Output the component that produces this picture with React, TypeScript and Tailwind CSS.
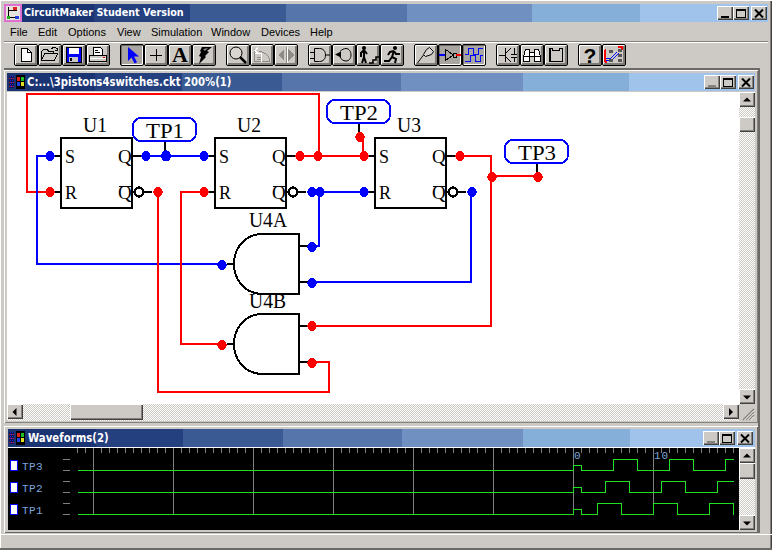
import React from "react";

const RAISED = "bg-[#cdcac5] shadow-[inset_1px_1px_0_#ffffff,inset_-1px_-1px_0_#404040,inset_-2px_-2px_0_#85827e]";
const DITHER = "bg-[repeating-conic-gradient(#ffffff_0_25%,#cdcac5_0_50%)] bg-[length:2px_2px]";

function Svg({ w = 22, h = 20, children }: { w?: number; h?: number; children: React.ReactNode }) {
  return (
    <svg width={w} height={h} viewBox={`0 0 ${w} ${h}`} shapeRendering="crispEdges" className="block">
      {children}
    </svg>
  );
}

function TB({ children, pressed }: { children: React.ReactNode; pressed?: boolean }) {
  return (
    <div
      className={
        pressed
          ? "w-[24px] h-[22px] border border-black rounded-[2px] bg-[#a9a6a2] shadow-[inset_1px_1px_0_#6f6c69,inset_-1px_-1px_0_#ffffff] flex items-center justify-center"
          : "w-[24px] h-[22px] border border-black rounded-[2px] bg-[#cdcac5] shadow-[inset_1px_1px_0_#ffffff,inset_-2px_-2px_0_#7d7a76] flex items-center justify-center"
      }
    >
      {children}
    </div>
  );
}

const I = {
  New: () => (
    <Svg>
      <path d="M6.500 3.500h6l4 4v9h-10z" fill="#fff" stroke="#000" />
      <path d="M12.500 3.500v4h4" fill="none" stroke="#000" />
    </Svg>
  ),
  Open: () => (
    <Svg>
      <path d="M2.500 15.500v-9l2-2h4l1 2h5v2" fill="#cdcac5" stroke="#000" />
      <path d="M2.500 15.500l3-7h13l-3 7z" fill="#cdcac5" stroke="#000" />
      <path d="M12.500 3.500l2-1h2l2 2M18.500 2.500v3h-3" fill="none" stroke="#000" />
    </Svg>
  ),
  Save: () => (
    <Svg>
      <rect x="3.500" y="2.500" width="15" height="15" fill="#0000ff" stroke="#000" />
      <rect x="6" y="3" width="10" height="6" fill="#fff" />
      <rect x="6" y="12" width="9" height="5" fill="#cdcac5" />
      <rect x="7" y="13" width="2" height="3" fill="#000" />
    </Svg>
  ),
  Print: () => (
    <Svg>
      <path d="M6.500 2.500h7l2 2v6h-9z" fill="#fff" stroke="#000" />
      <path d="M8 5h3M8 7h5" stroke="#000" />
      <path d="M2.500 10.500h17v6h-17z" fill="#cdcac5" stroke="#000" />
      <path d="M3 13h16" stroke="#fff" />
      <rect x="16" y="12" width="2" height="1" fill="#d00" />
    </Svg>
  ),
  Arrow: () => (
    <svg width="22" height="20" viewBox="0 0 22 20" className="block">
      <path d="M7 2l0 14 3.500-3.500 3 6 2.500-1.200-3-5.800 5 0z" fill="#0000ff" />
    </svg>
  ),
  Plus: () => (
    <Svg>
      <path d="M11 4v12M5 10h12" stroke="#000" />
    </Svg>
  ),
  Lightning: () => (
    <svg width="22" height="20" viewBox="0 0 22 20" className="block">
      <path d="M9 2h10l-5 4 2 1-4 4 1 1-7 7 2-7-2-1 2-4-1-1z" fill="#000" />
      <path d="M10 4l5-1-3 3z" fill="#8a8a8a" />
    </svg>
  ),
  Mag: () => (
    <svg width="22" height="20" viewBox="0 0 22 20" className="block">
      <circle cx="9" cy="8" r="6" fill="#d9d6d2" stroke="#000" strokeWidth="1" />
      <path d="M13 12l6 6" stroke="#000" strokeWidth="2.500" />
    </svg>
  ),
  Proto: () => (
    <Svg>
      <path d="M3.500 3.500v13h15c0-7-6-10-11-10" fill="none" stroke="#8d8a86" />
      <path d="M3.500 8.500h7v8M7 2.500l-3 3 3 3" fill="none" stroke="#fff" />
      <path d="M6 12h4M6 14h4" stroke="#8d8a86" />
    </Svg>
  ),
  Flip: () => (
    <Svg>
      <path d="M9 4v12l-6-6z" fill="#8d8a86" />
      <path d="M13 4v12l6-6z" fill="#8d8a86" />
      <path d="M11 2v16" stroke="#8d8a86" />
      <path d="M12 2v16" stroke="#fff" />
    </Svg>
  ),
  Gate: () => (
    <svg width="22" height="20" viewBox="0 0 22 20" className="block">
      <path d="M5.500 3.500h5c4 0 6 3 6 6.500s-2 6.500-6 6.500h-5z" fill="none" stroke="#000" />
      <path d="M1 7.500h4M1 13.500h4M17 10h4" stroke="#000" />
    </svg>
  ),
  Loop: () => (
    <svg width="22" height="20" viewBox="0 0 22 20" className="block">
      <path d="M7 6.500c2-2 4-3 6-3 3 0 5 3 5 6.500s-2 6-5 6-5-2-6-4" fill="none" stroke="#000" />
      <path d="M2 9.500l6-3v6z" fill="#000" />
    </svg>
  ),
  Walk: () => (
    <svg width="22" height="20" viewBox="0 0 22 20" className="block">
      <circle cx="7" cy="3" r="2" fill="#000" />
      <path d="M7 5l-3 3v4M7 5l3 4M7 6v6l-2 6M7 12l2 6" fill="none" stroke="#000" strokeWidth="2" />
      <path d="M12 18h4v-3h3v-3h3" fill="none" stroke="#000" strokeWidth="1.600" />
    </svg>
  ),
  Run: () => (
    <svg width="22" height="20" viewBox="0 0 22 20" className="block">
      <circle cx="14" cy="3" r="2" fill="#000" />
      <path d="M13 6l-4 1-2 3M13 6l-2 6 4 2 -1 4M13 6l2 3h4M11 12l-3 4H3" fill="none" stroke="#000" strokeWidth="2" />
    </svg>
  ),
  Probe: () => (
    <svg width="22" height="20" viewBox="0 0 22 20" className="block">
      <path d="M11.500 4.500l3-2 4 4-2 3-6 2-2-2z" fill="#d9d6d2" stroke="#000" />
      <path d="M8.500 10l-6 8" stroke="#000" />
    </svg>
  ),
  Inv: () => (
    <Svg>
      <path d="M0 10h6" stroke="#0000ff" strokeWidth="2" />
      <path d="M6.500 4.500v11l8-5.500z" fill="none" stroke="#000" />
      <rect x="14" y="8" width="3" height="4" fill="none" stroke="#000" />
      <path d="M17 10h5" stroke="#ff0000" strokeWidth="2" />
    </Svg>
  ),
  Square: () => (
    <Svg>
      <path d="M2 9.500h3v-6h5v6h5v-6h5M2 16.500h5v-6h5v6h5v-6h3" fill="none" stroke="#0000ff" />
    </Svg>
  ),
  Tran: () => (
    <Svg>
      <path d="M8.500 3v14M2 10h6M9 8l5-5M9 12l5 5" stroke="#000" fill="none" />
      <path d="M14 9h6M14 12h6M17 3v6M17 12v5" stroke="#000" />
    </Svg>
  ),
  Bino: () => (
    <Svg>
      <path d="M4.500 4.500h4v3h5v-3h4l2 7v5h-6v-5h-5v5h-6v-5z" fill="#fff" stroke="#000" />
      <path d="M8.500 4v8M13.500 4v8M3 11h6M13 11h6" stroke="#000" />
    </Svg>
  ),
  Chip: () => (
    <Svg>
      <path d="M4.500 3.500h3v2h7v-2h3v13h-13z" fill="none" stroke="#000" strokeWidth="1" />
      <path d="M5 4v12M17 4v12" stroke="#000" />
    </Svg>
  ),
  Net: () => (
    <Svg>
      <path d="M3 5c-1 0-1 1-1 3v7c0 1 1 2 2 2" fill="none" stroke="#ff0000" strokeWidth="2" />
      <path d="M15 2h4v3" fill="none" stroke="#ff0000" strokeWidth="2" />
      <path d="M3 15h6l7-7M3 13h5l6-6" fill="none" stroke="#0000ff" />
      <rect x="6" y="5" width="4" height="3" fill="#555" />
      <rect x="15" y="4" width="4" height="3" fill="#555" />
      <rect x="15" y="9" width="4" height="3" fill="#555" />
      <rect x="6" y="14" width="4" height="3" fill="#555" />
      <rect x="15" y="14" width="4" height="3" fill="#555" />
    </Svg>
  ),
};

function AppIcon() {
  return (
    <svg width="16" height="14" viewBox="0 0 16 14" className="block" shapeRendering="crispEdges">
      <rect x="0" y="1" width="5" height="12" fill="#111a55" />
      <path d="M0 3h5M0 7h5M0 11h5" stroke="#d01818" strokeDasharray="1 1" />
      <path d="M1 1v12M3 1v12" stroke="#2020d8" strokeDasharray="1 1" />
      <rect x="7" y="0" width="9" height="14" fill="#000" />
      <rect x="8" y="2" width="3" height="4" fill="#e02020" />
      <rect x="12" y="2" width="3" height="4" fill="#20c020" />
      <rect x="8" y="7" width="3" height="4" fill="#2040e0" />
      <rect x="12" y="7" width="3" height="4" fill="#e0e020" />
    </svg>
  );
}

function MainIcon() {
  return (
    <svg width="18" height="18" viewBox="0 0 18 18" className="block" shapeRendering="crispEdges">
      <rect x="0" y="0" width="18" height="18" fill="#e070d0" />
      <rect x="2" y="2" width="14" height="14" fill="#e6e3df" />
      <path d="M4.500 3v10h8M4 6.500h9" stroke="#000" fill="none" />
      <rect x="9" y="3" width="4" height="3" fill="#e02020" />
      <rect x="3" y="12" width="3" height="3" fill="#20b020" />
      <rect x="11" y="12" width="4" height="3" fill="#2040e0" />
    </svg>
  );
}

function WinBtn({ kind, disabled }: { kind: "min" | "max" | "close"; disabled?: boolean }) {
  return (
    <div className={`w-[16px] h-[14px] flex items-center justify-center ${RAISED}`}>
      <svg width="12" height="11" viewBox="0 0 12 11" shapeRendering="crispEdges" className="block">
        {kind === "min" && <rect x="2" y="8" width="8" height="2" fill={disabled ? "#85827e" : "#000"} />}
        {kind === "max" && (
          <>
            <rect x="1.500" y="1.500" width="9" height="8" fill="none" stroke="#000" />
            <rect x="1" y="1" width="10" height="2" fill="#000" />
          </>
        )}
        {kind === "close" && <path d="M2 1.500l8 8M10 1.500l-8 8" fill="none" stroke="#000" strokeWidth="2" shapeRendering="auto" />}
      </svg>
    </div>
  );
}

function ScrollBtn({ dir }: { dir: "up" | "down" | "left" | "right" }) {
  const path = { up: "M4 8.500l4-4 4 4z", down: "M4 5.500l4 4 4-4z", left: "M9.500 3l-4 4 4 4z", right: "M6 3l4 4-4 4z" }[dir];
  return (
    <div className={`w-[16px] h-[15px] shrink-0 flex items-center justify-center ${RAISED}`}>
      <svg width="16" height="14" viewBox="0 0 16 14" className="block">
        <path d={path} fill="#000" />
      </svg>
    </div>
  );
}

function Dot({ x, y, c, r = 4.6 }: { x: number; y: number; c: string; r?: number }) {
  return <ellipse cx={x} cy={y} rx={r} ry={r + 0.6} fill={c} />;
}

const RED = "#ff0000";
const BLUE = "#0000ff";
const SERIF = "'Liberation Serif', serif";

function Letter({ x, y, t, size = 17, len }: { x: number; y: number; t: string; size?: number; len?: number }) {
  return (
    <text x={x} y={y} fontFamily={SERIF} fontSize={size} fill="#000" textLength={len} lengthAdjust={len ? "spacingAndGlyphs" : undefined}>
      {t}
    </text>
  );
}

function FlipFlop({ x }: { x: number }) {
  return (
    <g>
      <rect x={x} y={138} width={71} height={70} fill="#fff" stroke="#000" strokeWidth="2" />
      <Letter x={x + 4} y={163} t="S" size={18} />
      <Letter x={x + 4} y={199} t="R" size={18} />
      <Letter x={x + 57} y={163} t="Q" size={19} />
      <Letter x={x + 57} y={199} t="Q" size={19} />
      <path d={`M${x + 58} 186h13`} stroke="#000" strokeWidth="1" />
      <path d={`M${x - 6} 156h6M${x - 6} 192h6M${x + 71} 156h9`} stroke="#000" strokeWidth="2" fill="none" />
      <circle cx={x + 78} cy={192} r={4.5} fill="#fff" stroke="#000" strokeWidth="2.500" />
      <path d={`M${x + 83} 192h8`} stroke="#000" strokeWidth="2" />
    </g>
  );
}

function Gate({ y }: { y: number }) {
  return (
    <g>
      <path d={`M299 ${y}h-36c-18 0-29 14-29 30s11 30 29 30h36z`} fill="#fff" stroke="#000" strokeWidth="2" />
      <path d={`M227 ${y + 30}h7M299 ${y + 12}h10M299 ${y + 48}h10`} stroke="#000" strokeWidth="2" />
    </g>
  );
}

function TP({ x, y, t }: { x: number; y: number; t: string }) {
  return (
    <g>
      <rect x={x} y={y} width={63} height={23} rx={8} fill="#fff" stroke={BLUE} strokeWidth="2" />
      <Letter x={x + 13} y={y + 20} t={t} size={20} len={38} />
    </g>
  );
}

function Circuit() {
  return (
    <svg width="733" height="312" viewBox="7 92 733 312" className="block" shapeRendering="crispEdges">
      <g fill="none" strokeWidth="2">
        <path d="M50 192H27V94H319V156" stroke={RED} />
        <path d="M50 156H37V264H222" stroke={BLUE} />
        <path d="M146 156H204" stroke={BLUE} />
        <path d="M158 192V392H329V362H312" stroke={RED} />
        <path d="M204 192H181V344H222" stroke={RED} />
        <path d="M300 156H364M363 137V156" stroke={RED} />
        <path d="M312 192H364M319 192V246H312" stroke={BLUE} />
        <path d="M460 156H491V326H312M491 176H538" stroke={RED} />
        <path d="M472 192H471V282H312" stroke={BLUE} />
      </g>
      <path d="M165 140V156M359 122V136M537 162V176" stroke="#000" strokeWidth="2" />
      <FlipFlop x={61} />
      <FlipFlop x={215} />
      <FlipFlop x={375} />
      <Gate y={234} />
      <Gate y={314} />
      <TP x={133} y={118} t="TP1" />
      <TP x={327} y={100} t="TP2" />
      <TP x={505} y={140} t="TP3" />
      <Letter x={83} y={132} t="U1" size={20} len={24} />
      <Letter x={237} y={132} t="U2" size={20} len={24} />
      <Letter x={397} y={132} t="U3" size={20} len={24} />
      <Letter x={249} y={227} t="U4A" size={20} len={38} />
      <Letter x={249} y={308} t="U4B" size={20} len={37} />
      <Dot x={50} y={156} c={BLUE} />
      <Dot x={50} y={192} c={RED} />
      <Dot x={146} y={156} c={BLUE} />
      <Dot x={166} y={156} c={BLUE} r={5} />
      <Dot x={204} y={156} c={BLUE} />
      <Dot x={158} y={192} c={RED} />
      <Dot x={204} y={192} c={RED} />
      <Dot x={300} y={156} c={RED} />
      <Dot x={318} y={156} c={RED} />
      <Dot x={364} y={156} c={RED} />
      <Dot x={360} y={137} c={RED} />
      <Dot x={312} y={192} c={BLUE} />
      <Dot x={320} y={192} c={BLUE} />
      <Dot x={364} y={192} c={BLUE} />
      <Dot x={460} y={156} c={RED} />
      <Dot x={472} y={192} c={BLUE} />
      <Dot x={492} y={177} c={RED} />
      <Dot x={538} y={177} c={RED} />
      <Dot x={222} y={265} c={BLUE} />
      <Dot x={222} y={345} c={RED} />
      <Dot x={312} y={247} c={BLUE} />
      <Dot x={312} y={283} c={BLUE} />
      <Dot x={312} y={326} c={RED} />
      <Dot x={312} y={363} c={RED} />
    </svg>
  );
}

function Waves() {
  const ticks: number[] = [];
  for (let x = 77; x < 741; x += 8) ticks.push(x);
  const grid = [93, 173, 253, 333, 413, 493, 573, 653];
  const rows = [459, 481, 503];
  const mono = "'Liberation Mono', monospace";
  return (
    <svg width="733" height="82" viewBox="8 448 733 82" className="block" shapeRendering="crispEdges">
      {ticks.map((x) => (
        <path key={x} d={`M${x + 0.5} 448v5`} stroke="#808080" />
      ))}
      {grid.map((x) => (
        <path key={x} d={`M${x + 0.5} 448V514`} stroke="#808080" />
      ))}
      {rows.map((y) => (
        <path key={y} d={`M63 ${y + 0.5}h7M63 ${y + 11.5}h7`} stroke="#808080" />
      ))}
      <g fill="none" stroke="#22e022">
        <path d="M78 470.500H573.500V465.500H581.500V470.500H613.500V459.500H637.500V470.500H669.500V459.500H693.500V470.500H725.500V459.500H734" />
        <path d="M78 492.500H573.500V487.500H581.500V492.500H605.500V481.500H629.500V492.500H661.500V481.500H685.500V492.500H717.500V481.500H734" />
        <path d="M78 514.500H573.500V509.500H581.500V514.500H597.500V503.500H621.500V514.500H653.500V503.500H677.500V514.500H709.500V503.500H733.500V514.500" />
      </g>
      {[
        { y: 460, t: "TP3" },
        { y: 482, t: "TP2" },
        { y: 504, t: "TP1" },
      ].map((r) => (
        <g key={r.t}>
          <rect x="10.500" y={r.y + 0.5} width="7" height="10" fill="#fff" stroke="#0000ff" />
          <text x="22" y={r.y + 10} fontFamily={mono} fontSize="11" letterSpacing="0.400" fill="#7ba7dd">
            {r.t}
          </text>
        </g>
      ))}
      <text x="574" y="459" fontFamily={mono} fontSize="11" fill="#7ba7dd">0</text>
      <text x="654" y="459" fontFamily={mono} fontSize="11" letterSpacing="1" fill="#7ba7dd">10</text>
    </svg>
  );
}

const GROUPS: { gap: string; items: { key: string; node: React.ReactNode; pressed?: boolean }[] }[] = [
  { gap: "ml-[14px]", items: [{ key: "new", node: <I.New /> }, { key: "open", node: <I.Open /> }, { key: "save", node: <I.Save /> }, { key: "print", node: <I.Print /> }] },
  {
    gap: "ml-[10px]",
    items: [
      { key: "arrow", node: <I.Arrow />, pressed: true },
      { key: "plus", node: <I.Plus /> },
      { key: "A", node: <span className="font-['Liberation_Serif',serif] font-bold text-[22px] leading-none text-black">A</span> },
      { key: "bolt", node: <I.Lightning /> },
    ],
  },
  { gap: "ml-[10px]", items: [{ key: "mag", node: <I.Mag /> }, { key: "proto", node: <I.Proto /> }, { key: "flip", node: <I.Flip /> }] },
  { gap: "ml-[10px]", items: [{ key: "gate", node: <I.Gate /> }, { key: "loop", node: <I.Loop /> }, { key: "walk", node: <I.Walk /> }, { key: "run", node: <I.Run /> }] },
  { gap: "ml-[10px]", items: [{ key: "probe", node: <I.Probe /> }, { key: "inv", node: <I.Inv />, pressed: true }, { key: "sq", node: <I.Square />, pressed: true }] },
  { gap: "ml-[10px]", items: [{ key: "tran", node: <I.Tran /> }, { key: "bino", node: <I.Bino /> }, { key: "chip", node: <I.Chip /> }] },
  {
    gap: "ml-[10px]",
    items: [
      { key: "q", node: <span className="font-['Liberation_Sans',sans-serif] font-bold text-[21px] leading-none text-black">?</span> },
      { key: "net", node: <I.Net /> },
    ],
  },
];

const MENUS = [
  { t: "File", w: "w-[28px]" },
  { t: "Edit", w: "w-[30px]" },
  { t: "Options", w: "w-[49px]" },
  { t: "View", w: "w-[34px]" },
  { t: "Simulation", w: "w-[60px]" },
  { t: "Window", w: "w-[50px]" },
  { t: "Devices", w: "w-[49px]" },
  { t: "Help", w: "w-[40px]" },
];

export default function App() {
  return (
    <div className="w-[772px] h-[550px] overflow-hidden flex flex-col pt-[4px] px-[4px] bg-[#cdcac5] shadow-[inset_1px_1px_0_#ffffff,inset_-1px_-1px_0_#404040,inset_-2px_-2px_0_#85827e] font-['Liberation_Sans',sans-serif]">
      {/* main title */}
      <div className="h-[18px] shrink-0 flex items-center bg-[linear-gradient(90deg,#1a3372_0_90px,#24407f_90px_186px,#3a5a94_186px_282px,#5675ab_282px_403px,#6f90c0_403px_528px,#85aed9_528px_636px,#a0c3eb_636px)]">
        <MainIcon />
        <span className="ml-[2px] text-[11px] font-bold text-white font-['DejaVu_Sans',sans-serif] scale-x-[0.875] origin-left whitespace-nowrap">CircuitMaker Student Version</span>
        <div className="ml-auto flex items-center mr-[1px]">
          <WinBtn kind="min" />
          <WinBtn kind="max" />
          <div className="w-[2px]" />
          <WinBtn kind="close" />
        </div>
      </div>
      {/* menu */}
      <div className="h-[19px] shrink-0 flex items-center pl-[6px] pt-[1px] text-[11px] text-black">
        {MENUS.map((m) => (
          <span key={m.t} className={m.w}>{m.t}</span>
        ))}
      </div>
      <div className="h-[2px] shrink-0 border-t border-[#85827e] bg-white" />
      {/* toolbar */}
      <div className="h-[25px] shrink-0 flex items-start pt-[1px] -ml-[4px]">
        {GROUPS.map((g, i) => (
          <div key={i} className={`flex ${g.gap}`}>
            {g.items.map((b) => (
              <TB key={b.key} pressed={b.pressed}>{b.node}</TB>
            ))}
          </div>
        ))}
      </div>
      {/* MDI */}
      <div className="w-[756px] h-[465px] shrink-0 flex flex-col gap-[3px] border-t-2 border-r-2 border-[#6c6a67]">
        <div className="h-[353px] shrink-0 flex flex-col p-[3px] pb-[2px] bg-[#cdcac5] shadow-[inset_1px_1px_0_#ffffff,inset_-1px_-1px_0_#85827e]">
          <div className="h-[18px] shrink-0 flex items-center pl-[2px] bg-[linear-gradient(90deg,#1a3372_0_88px,#24407f_88px_175px,#3a5a94_175px_275px,#5675ab_275px_394px,#6f90c0_394px_516px,#85aed9_516px_622px,#a0c3eb_622px)]">
            <AppIcon />
            <span className="ml-[2px] text-[12px] font-bold text-white font-['DejaVu_Sans',sans-serif] scale-x-[0.842] origin-left whitespace-nowrap">C:...\3pistons4switches.ckt 200%(1)</span>
            <div className="ml-auto flex items-center mr-[1px]">
              <WinBtn kind="min" disabled />
              <WinBtn kind="max" />
              <div className="w-[2px]" />
              <WinBtn kind="close" />
            </div>
          </div>
          <div className="h-[1px] shrink-0 bg-[#cdcac5]" />
          <div className="flex h-[312px] shrink-0">
            <div className="w-[733px] h-[312px] bg-white overflow-hidden">
              <Circuit />
            </div>
            <div className={`w-[16px] h-[312px] flex flex-col ${DITHER}`}>
              <ScrollBtn dir="up" />
              <div className="h-[10px] shrink-0" />
              <div className={`w-[16px] h-[15px] shrink-0 ${RAISED}`} />
              <div className="flex-1" />
              <ScrollBtn dir="down" />
            </div>
          </div>
          <div className={`flex h-[17px] shrink-0 ${DITHER}`}>
            <ScrollBtn dir="left" />
            <div className="w-[47px] shrink-0" />
            <div className={`w-[73px] h-[16px] shrink-0 ${RAISED}`} />
            <div className="flex-1" />
            <ScrollBtn dir="right" />
            <div className="w-[16px] h-[17px] bg-[#cdcac5] flex items-end justify-end">
              <svg width="14" height="14" viewBox="0 0 14 14" className="block">
                <path d="M2 13L13 2M5 13L13 5M8 13l5-5" stroke="#85827e" strokeWidth="1.500" />
                <path d="M3.500 13L13 3.500M6.500 13L13 6.500M9.500 13L13 9.500" stroke="#fff" strokeWidth="0.800" />
              </svg>
            </div>
          </div>
        </div>
        <div className="h-[107px] shrink-0 flex flex-col pt-[3px] pl-[4px] pr-[3px] bg-[#cdcac5] shadow-[inset_1px_1px_0_#ffffff,inset_-1px_-1px_0_#6c6a67]">
          <div className="h-[18px] shrink-0 flex items-center bg-[linear-gradient(90deg,#1a3372_0_88px,#24407f_88px_175px,#3a5a94_175px_275px,#5675ab_275px_394px,#6f90c0_394px_515px,#85aed9_515px_622px,#a0c3eb_622px)] pl-[1px]">
            <AppIcon />
            <span className="ml-[3px] text-[12px] font-bold text-white font-['DejaVu_Sans',sans-serif] scale-x-[0.847] origin-left whitespace-nowrap">Waveforms(2)</span>
            <div className="ml-auto flex items-center mr-[2px]">
              <WinBtn kind="min" disabled />
              <WinBtn kind="max" />
              <div className="w-[2px]" />
              <WinBtn kind="close" />
            </div>
          </div>
          <div className="h-[1px] shrink-0 bg-white" />
          <div className="flex h-[82px] shrink-0">
            <div className="w-[733px] h-[82px] bg-black overflow-hidden">
              <Waves />
            </div>
            <div className={`w-[16px] h-[82px] flex flex-col ${DITHER}`}>
              <ScrollBtn dir="up" />
              <div className={`w-[16px] h-[16px] shrink-0 ${RAISED}`} />
              <div className="flex-1" />
              <ScrollBtn dir="down" />
            </div>
          </div>
        </div>
      </div>
      {/* status */}
      <div className="flex-1 -mx-[4px] mt-[1px] border-t border-white border-b-2 border-b-[#6c6a67]" />
    </div>
  );
}
